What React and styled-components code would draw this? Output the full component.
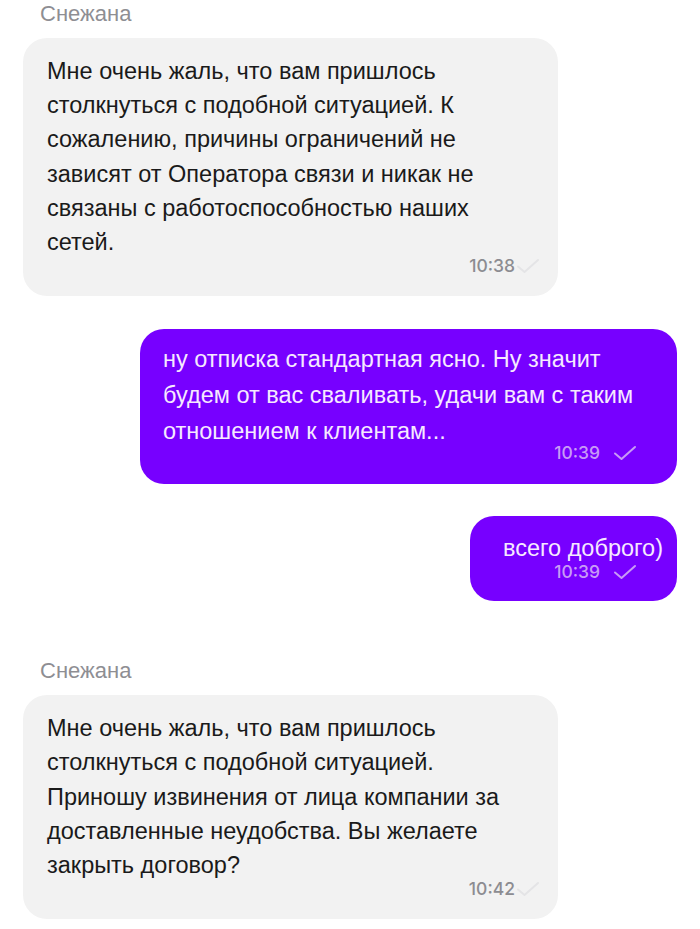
import React from 'react';
import styled, { createGlobalStyle } from 'styled-components';

const GlobalStyle = createGlobalStyle`
  body {
    margin: 0;
    background: #ffffff;
    font-family: "Liberation Sans", Arial, sans-serif;
  }
`;

const Feed = styled.main`
  display: flex;
  flex-direction: column;
  padding: 0 23px;
`;

const Author = styled.div`
  font-size: 22px;
  line-height: 26px;
  color: #8e8e93;
  padding-left: 17px;
  margin-top: ${props => props.top}px;
  margin-bottom: 11px;
`;

const Bubble = styled.div`
  align-self: ${props => (props.mine ? 'flex-end' : 'flex-start')};
  display: flex;
  flex-direction: column;
  box-sizing: border-box;
  width: ${props => props.width}px;
  margin-top: ${props => props.top || 0}px;
  padding: ${props => props.pad};
  border-radius: 24px;
  background: ${props => (props.mine ? '#7700ff' : '#f2f2f2')};
  color: ${props => (props.mine ? '#f6e9ff' : '#1a1a1a')};
`;

const Text = styled.div`
  font-size: 23.5px;
  line-height: ${props => props.lh}px;
  white-space: pre-line;
  text-align: ${props => props.align || 'left'};
`;

const Meta = styled.div`
  display: flex;
  justify-content: flex-end;
  align-items: center;
  gap: ${props => (props.mine ? 13 : 1)}px;
  margin-top: ${props => props.gap}px;
  margin-right: ${props => props.right}px;
  font-family: Inter, "Liberation Sans", sans-serif;
  font-weight: 500;
  font-size: 17.5px;
  line-height: 14px;
  color: ${props => (props.mine ? '#c89af6' : '#8c8c91')};
`;

const Check = ({ color }) => (
  <svg width="24" height="16" viewBox="0 0 24 16" fill="none">
    <path d="M2 8.5 L8.5 14 L22 2" stroke={color} strokeWidth="2" strokeLinecap="round" strokeLinejoin="round" />
  </svg>
);

const messages = [
  {
    author: 'Снежана',
    authorTop: 1,
    width: 535,
    lh: 34.2,
    pad: '16px 24px 22px 24px',
    text: 'Мне очень жаль, что вам пришлось\nстолкнуться с подобной ситуацией. К\nсожалению, причины ограничений не\nзависят от Оператора связи и никак не\nсвязаны с работоспособностью наших\nсетей.',
    time: '10:38',
    gap: -1,
    right: -6,
  },
  {
    mine: true,
    top: 33,
    width: 537,
    lh: 36,
    pad: '12px 14px 23px 23px',
    text: 'ну отписка стандартная ясно. Ну значит\nбудем от вас сваливать, удачи вам с таким\nотношением к клиентам...',
    time: '10:39',
    gap: -4,
    right: 26,
  },
  {
    mine: true,
    top: 32,
    width: 207,
    lh: 26,
    pad: '19px 14px 21px 17px',
    align: 'right',
    text: 'всего доброго)',
    time: '10:39',
    gap: 3,
    right: 26,
  },
  {
    author: 'Снежана',
    authorTop: 57,
    width: 535,
    lh: 34.2,
    pad: '16px 24px 22px 24px',
    text: 'Мне очень жаль, что вам пришлось\nстолкнуться с подобной ситуацией.\nПриношу извинения от лица компании за\nдоставленные неудобства. Вы желаете\nзакрыть договор?',
    time: '10:42',
    gap: -1,
    right: -6,
  },
];

export default function App() {
  return (
    <>
      <GlobalStyle />
      <Feed>
        {messages.map((m, i) => (
          <React.Fragment key={i}>
            {m.author ? <Author top={m.authorTop}>{m.author}</Author> : null}
            <Bubble mine={m.mine} width={m.width} top={m.top} pad={m.pad}>
              <Text lh={m.lh} align={m.align}>{m.text}</Text>
              <Meta mine={m.mine} gap={m.gap} right={m.right}>
                <span>{m.time}</span>
                <Check color={m.mine ? '#c89af6' : '#e4e4e6'} />
              </Meta>
            </Bubble>
          </React.Fragment>
        ))}
      </Feed>
    </>
  );
}
